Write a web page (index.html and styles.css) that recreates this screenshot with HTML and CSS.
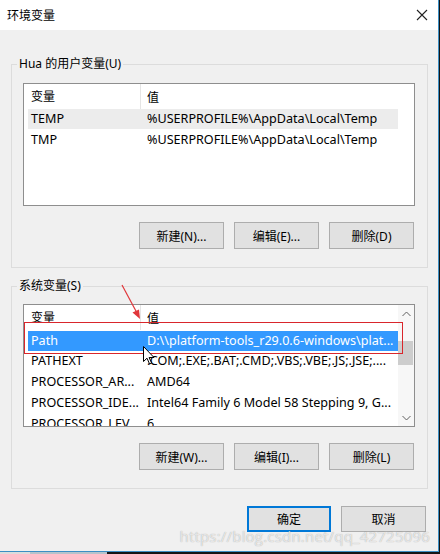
FILE: index.html
```html
<!DOCTYPE html>
<html lang="zh-CN">
<head>
    <meta charset="UTF-8">
    <meta name="viewport" content="width=device-width, initial-scale=1.0">
    <title>环境变量</title>
    <link rel="stylesheet" href="styles.css">
</head>
<body>
    <div class="window">
        <div class="titlebar">
            <span class="title">环境变量</span>
            <svg class="close" width="12" height="12" viewBox="0 0 12 12">
                <path d="M1 1 L11 11 M11 1 L1 11" stroke="#222" stroke-width="1.1" fill="none"/>
            </svg>
        </div>

        <div class="content">
            <fieldset class="group">
                <legend>Hua 的用户变量(U)</legend>
                <div class="list">
                    <div class="list-body">
                        <div class="list-head">
                            <div class="col-name">变量</div>
                            <div class="col-value">值</div>
                        </div>
                        <div class="row hover">
                            <div class="col-name">TEMP</div>
                            <div class="col-value">%USERPROFILE%\AppData\Local\Temp</div>
                        </div>
                        <div class="row">
                            <div class="col-name">TMP</div>
                            <div class="col-value">%USERPROFILE%\AppData\Local\Temp</div>
                        </div>
                    </div>
                    <div class="scroll-space"></div>
                </div>
                <div class="buttons">
                    <button class="btn">新建(N)...</button>
                    <button class="btn">编辑(E)...</button>
                    <button class="btn">删除(D)</button>
                </div>
            </fieldset>

            <fieldset class="group group-sys">
                <legend>系统变量(S)</legend>
                <div class="list list-sys">
                    <div class="list-body">
                        <div class="list-head">
                            <div class="col-name">变量</div>
                            <div class="col-value">值</div>
                        </div>
                        <div class="row selected">
                            <div class="col-name">Path</div>
                            <div class="col-value">D:\\platform-tools_r29.0.6-windows\plat...</div>
                        </div>
                        <div class="row">
                            <div class="col-name">PATHEXT</div>
                            <div class="col-value">.COM;.EXE;.BAT;.CMD;.VBS;.VBE;.JS;.JSE;....</div>
                        </div>
                        <div class="row">
                            <div class="col-name">PROCESSOR_AR...</div>
                            <div class="col-value">AMD64</div>
                        </div>
                        <div class="row">
                            <div class="col-name">PROCESSOR_IDE...</div>
                            <div class="col-value">Intel64 Family 6 Model 58 Stepping 9, G...</div>
                        </div>
                        <div class="row">
                            <div class="col-name">PROCESSOR_LEV...</div>
                            <div class="col-value">6</div>
                        </div>
                    </div>
                    <div class="scrollbar">
                        <div class="arrow">
                            <svg width="9" height="6" viewBox="0 0 9 6"><path d="M0.5 5 L4.5 1 L8.5 5" stroke="#606060" fill="none"/></svg>
                        </div>
                        <div class="track"><div class="thumb"></div></div>
                        <div class="arrow">
                            <svg width="9" height="6" viewBox="0 0 9 6"><path d="M0.5 1 L4.5 5 L8.5 1" stroke="#606060" fill="none"/></svg>
                        </div>
                    </div>
                    <div class="mark-box"></div>
                    <svg class="cursor" width="12" height="19" viewBox="0 0 12 19">
                        <path d="M0.5 0.5 L0.5 15.5 L4 12.2 L6.6 18 L8.6 17.1 L6.1 11.5 L11 11.5 Z" fill="#fff" stroke="#000" stroke-width="1"/>
                    </svg>
                </div>
                <div class="buttons">
                    <button class="btn">新建(W)...</button>
                    <button class="btn">编辑(I)...</button>
                    <button class="btn">删除(L)</button>
                </div>
            </fieldset>

            <div class="footer">
                <button class="btn btn-default">确定</button>
                <button class="btn">取消</button>
            </div>
        </div>

        <!-- 标注箭头 -->
        <svg class="mark-arrow" width="30" height="40" viewBox="0 0 30 40">
            <path d="M2 1 L17 29" stroke="#e0363a" stroke-width="1.2" fill="none"/>
            <path d="M20 35 L12.5 28.5 L19 25.5 Z" fill="#e0363a"/>
        </svg>

        <div class="watermark">https://blog.csdn.net/qq_42725096</div>
    </div>
</body>
</html>
```

FILE: styles.css
```css
body {
    margin: 0;
    width: 440px;
    height: 554px;
    overflow: hidden;
    background: linear-gradient(to right, #dcdcdc 0, #dcdcdc 30px, #b7c3cb 30px, #b7c3cb 107px, #151515 107px);
    font-family: "Noto Sans", "Noto Sans CJK SC", sans-serif;
    font-size: 12px;
    color: #000;
}
.window {
    position: relative;
    width: 438px;
    height: 551px;
    background: #f0f0f0;
    border-right: 1px solid #3c8fc4;
    border-bottom: 1px solid #3c8fc4;
    overflow: hidden;
}
.titlebar {
    height: 30px;
    background: #fff;
    display: flex;
    align-items: center;
    justify-content: space-between;
    padding: 0 10px 0 7px;
}
.title {
    font-size: 12px;
}
.close {
    display: block;
}
.content {
    padding: 26px 10px 0 11px;
}
.group {
    margin: 0;
    border: 1px solid #dcdcdc;
    padding: 11px 12px 18px 11px;
    min-width: 0;
}
.group legend {
    margin-left: -6px;
    padding: 0 2px;
    font-size: 12px;
    line-height: 16px;
}
.group-sys {
    margin-top: 10px;
    padding-top: 10px;
}
.list {
    position: relative;
    display: flex;
    height: 123px;
    box-sizing: border-box;
    border: 1px solid #8e8e8e;
    background: #fff;
}
.list-body {
    flex: 1;
    overflow: hidden;
}
.scroll-space {
    width: 16px;
}
.list-head {
    display: flex;
    height: 25px;
    align-items: center;
}
.list-head .col-name {
    width: 109px;
    padding-left: 7px;
    height: 25px;
    line-height: 25px;
    border-right: 1px solid #e5e5e5;
}
.list-head .col-value {
    padding-left: 6px;
}
.row {
    display: flex;
    height: 20px;
    line-height: 20px;
    margin: 0 0 1px 4px;
    white-space: nowrap;
    font-size: 12.6px;
}
.row .col-name {
    width: 109px;
    padding-left: 3px;
    flex: none;
}
.row .col-value {
    padding-left: 7px;
    overflow: hidden;
}
.row.hover {
    background: #ececec;
}
.row.selected {
    background: #3399ff;
    color: #fff;
}
.list-sys .row.selected {
    margin-top: 1px;
    margin-bottom: 0;
}
.scrollbar {
    width: 16px;
    display: flex;
    flex-direction: column;
    background: #f7f7f7;
}
.scrollbar .arrow {
    height: 17px;
    display: flex;
    align-items: center;
    justify-content: center;
}
.scrollbar .arrow svg {
    display: block;
}
.scrollbar .track {
    flex: 1;
}
.thumb {
    margin: 19px 1px 0 0;
    height: 24px;
    background: #cdcdcd;
}
.mark-box {
    position: absolute;
    left: 0;
    top: 17px;
    width: 377px;
    height: 30px;
    border: 1px solid #d9262c;
}
.cursor {
    position: absolute;
    left: 119px;
    top: 41px;
}
.buttons {
    display: flex;
    justify-content: flex-end;
    gap: 10px;
    margin-top: 16px;
    margin-right: 1px;
}
.btn {
    width: 85px;
    height: 27px;
    box-sizing: border-box;
    background: #e1e1e1;
    border: 1px solid #adadad;
    font-family: "Noto Sans", "Noto Sans CJK SC", sans-serif;
    font-size: 12px;
    color: #000;
    padding: 0;
}
.footer {
    display: flex;
    justify-content: flex-end;
    gap: 10px;
    margin-top: 17px;
    margin-right: 2px;
}
.footer .btn {
    height: 26px;
}
.btn-default {
    width: 84px;
    border: 1px solid #0078d7;
    box-shadow: inset 0 0 0 1px #0078d7;
}
.mark-arrow {
    position: absolute;
    left: 120px;
    top: 284px;
}
.watermark {
    position: absolute;
    right: 8px;
    bottom: 5px;
    font-family: "Open Sans", sans-serif;
    font-size: 15px;
    color: rgba(250, 250, 250, 0.75);
    text-shadow: 0 0 1px rgba(0, 0, 0, 0.35);
    letter-spacing: 0.2px;
}
```
